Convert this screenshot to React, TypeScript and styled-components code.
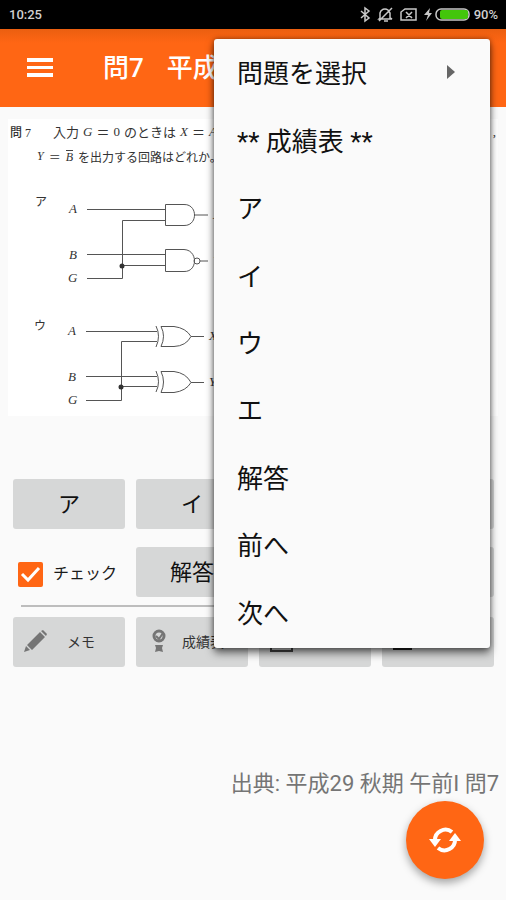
import React from "react";
import styled, { createGlobalStyle } from "styled-components";

const sans = `Roboto, "Noto Sans CJK JP", sans-serif`;

const GlobalStyle = createGlobalStyle`
  *, *::before, *::after { box-sizing: border-box; }
  body { margin: 0; background: #fafafa; color: #1b1b1b; font-family: ${sans}; }
  button, input { font-family: inherit; margin: 0; }
`;

const Screen = styled.div`
  position: relative;
  display: flex;
  flex-direction: column;
  min-height: 100vh;
  overflow: hidden;
`;

const StatusBar = styled.header`
  display: flex;
  align-items: center;
  justify-content: space-between;
  height: 29px;
  padding: 0 8px 0 9px;
  background: #000;
  color: #d0d0d0;
  font-size: 13px;
  font-weight: 500;
`;

const StatusIcons = styled.div`
  display: flex;
  align-items: center;
  gap: 3px;
`;

const Toolbar = styled.div`
  display: flex;
  align-items: center;
  height: 78px;
  padding: 0 26px;
  gap: 49px;
  background: linear-gradient(#ea5f10, #ff6614 14px);
  color: #fff;
`;

const IconButton = styled.button`
  display: flex;
  padding: 0;
  border: 0;
  background: none;
  color: inherit;
`;

const Title = styled.h1`
  display: flex;
  flex: 1;
  gap: 23px;
  margin: 0;
  overflow: hidden;
  white-space: nowrap;
  font-size: 26px;
  font-weight: 500;
  line-height: 40px;
`;

const Figure = styled.section`
  margin: 12px 8px 0;
  padding: 0 0 3px 2px;
  background: #fff;
  color: #333;
`;

const Statement = styled.p<{ $indent?: boolean }>`
  display: flex;
  align-items: center;
  gap: ${(p) => (p.$indent ? 5 : 4)}px;
  height: 25px;
  margin: 0;
  padding: 0 2px 0 ${(p) => (p.$indent ? 27 : 0)}px;
  white-space: nowrap;
  overflow: hidden;
  font-family: "Liberation Serif", "Noto Sans CJK JP", serif;
  font-size: ${(p) => (p.$indent ? 12 : 13)}px;
`;

const QuestionNo = styled.strong`
  width: 39px;
  font-size: 12px;
  font-weight: 500;
`;

const LineEnd = styled.span`
  margin-left: auto;
`;

const Overline = styled.i`
  line-height: 12px;
  border-top: 1px solid #444;
`;

const Circuits = styled.svg`
  display: block;
  width: 100%;
  height: 244px;
  font-family: "Liberation Serif", "Noto Sans CJK JP", serif;
`;

const Answers = styled.div`
  display: grid;
  grid-template-columns: repeat(4, 1fr);
  gap: 18px 11px;
  margin: 63px 12px 0 13px;
`;

const Tools = styled(Answers)`
  margin-top: 10px;
`;

const GreyButton = styled.button`
  height: 50px;
  padding: 0 0 4px;
  border: 0;
  border-radius: 3px;
  background: #d6d7d7;
  color: #111;
  font-size: 22px;
  font-weight: 400;
`;

const ToolButton = styled(GreyButton)`
  display: flex;
  align-items: center;
  padding: 0 0 2px 10px;
  font-size: 14px;
  color: #333;
  white-space: nowrap;
  overflow: hidden;
`;

const ToolLabel = styled.span<{ $start?: boolean }>`
  flex: 1;
  padding-left: ${(p) => (p.$start ? 10 : 0)}px;
  padding-right: ${(p) => (p.$start ? 0 : 12)}px;
  text-align: ${(p) => (p.$start ? "left" : "center")};
`;

const CheckLabel = styled.label`
  display: flex;
  align-items: center;
  gap: 10px;
  padding: 4px 0 0 5px;
  font-size: 16px;
  line-height: 20px;
  white-space: nowrap;
`;

const CheckBox = styled.input`
  appearance: none;
  width: 25px;
  height: 25px;
  border-radius: 2px;
  background: #ff6614
    url("data:image/svg+xml,%3Csvg xmlns='http://www.w3.org/2000/svg' viewBox='0 0 25 25'%3E%3Cpath d='M4 12l6 6L21 6' fill='none' stroke='white' stroke-width='3'/%3E%3C/svg%3E");
`;

const Divider = styled.hr`
  width: calc(100% - 42px);
  height: 2px;
  margin: 8px 21px 0;
  border: 0;
  background: #bdbdbd;
`;

const Source = styled.p`
  margin: 100px 7px 0 0;
  color: #757575;
  text-align: right;
  font-size: 22px;
  line-height: 34px;
  white-space: nowrap;
`;

const Fab = styled.button`
  display: flex;
  align-items: center;
  justify-content: center;
  align-self: flex-end;
  width: 78px;
  height: 78px;
  margin: 0 22px 21px 0;
  padding: 0;
  border: 0;
  border-radius: 50%;
  background: #ff6614;
  color: #fff;
  box-shadow: 0 4px 8px rgba(0, 0, 0, 0.35);
`;

const Menu = styled.div`
  position: absolute;
  top: 39px;
  right: 16px;
  display: grid;
  grid-auto-rows: 1fr;
  width: 276px;
  height: 609px;
  padding-bottom: 2px;
  border-radius: 3px;
  background: #fafafa;
  box-shadow: 0 5px 8px rgba(0, 0, 0, 0.55), 0 0 5px rgba(0, 0, 0, 0.4);
`;

const MenuItem = styled.button`
  display: flex;
  align-items: center;
  justify-content: space-between;
  padding: 0 35px 2px 23px;
  border: 0;
  background: none;
  color: #111;
  font-size: 26px;
  text-align: left;
  white-space: nowrap;
`;

function StatusGlyphs() {
  return (
    <StatusIcons>
      <svg width="111" height="18" viewBox="360 6 111 18" fill="none" stroke="#c8c8c8" strokeWidth="1.5" aria-hidden="true">
        <path d="M361 11l8 7-4 3V8l4 3-8 7" />
        <path d="M380 18v-5a5 5 0 0 1 8-3l2 3v5l2 1h-13zM384 21h4M379 21L392 8" />
        <path d="M405 9h11v11h-15v-8zM406 12l6 6M412 12l-6 6" />
        <path d="M430 8l-6 7h4l-2 6 6-8h-3z" fill="#c8c8c8" stroke="none" />
        <rect x="436" y="9" width="33" height="11" rx="5" />
        <rect x="440" y="10" width="28" height="9" rx="2" fill="#43c60b" stroke="none" />
      </svg>
      <span>90%</span>
    </StatusIcons>
  );
}

function CircuitDrawing() {
  return (
    <Circuits viewBox="10 170 488 244" preserveAspectRatio="xMinYMin meet" role="img" aria-label="論理回路" fill="none" stroke="#555" strokeWidth="1">
      <path d="M87 210.500H165M87 255.500H165M87 279.500H122.500V221.500H165M122.500 266.500H165M194 216H208M200 262H208" />
      <path d="M165.500 205.500H184C198 205 198 227 184 226.500H165.500zM165.500 250.500H184C198 251 198 273 184 272.500H165.500z" />
      <circle cx="197" cy="262" r="3" />
      <path d="M86 332.500H157M86 377.500H157M86 401.500H121.500V342.500H157M121.500 387.500H157M191 337.500H204M191 383.500H204" />
      <path d="M161 327.500H174Q186 329 191 337.500Q186 347 174 347.500H161Q166 337 161 327.500zM156 327Q161 337 156 348" />
      <path d="M161 372.500H174Q186 374 191 383.500Q186 392 174 393.500H161Q166 383 161 372.500zM156 372Q161 383 156 393" />
      <g fill="#333" stroke="none">
        <circle cx="122" cy="267" r="2.5" />
        <circle cx="121" cy="388" r="2.5" />
        <g fontSize="12"><text x="35" y="207">ア</text><text x="34" y="331">ウ</text></g>
        <g fontSize="13" fontStyle="italic">
          <text x="69" y="214">A</text><text x="69" y="260">B</text><text x="68" y="283">G</text>
          <text x="68" y="336">A</text><text x="68" y="382">B</text><text x="68" y="405">G</text>
          <text x="213" y="220">X</text><text x="213" y="266">Y</text>
          <text x="209" y="341">X</text><text x="209" y="387">Y</text>
        </g>
      </g>
    </Circuits>
  );
}

const menuItems = ["問題を選択", "** 成績表 **", "ア", "イ", "ウ", "エ", "解答", "前へ", "次へ"];

export default function App() {
  return (
    <Screen>
      <GlobalStyle />
      <StatusBar>
        <span>10:25</span>
        <StatusGlyphs />
      </StatusBar>
      <Toolbar>
        <IconButton aria-label="メニュー">
          <svg width="28" height="20" viewBox="0 0 28 20" fill="currentColor"><path d="M1 0h26v4H1zM1 8h26v3H1zM1 15h26v4H1z" /></svg>
        </IconButton>
        <Title><span>問7</span><span>平成29</span></Title>
      </Toolbar>
      <Figure>
        <Statement>
          <QuestionNo>問 7</QuestionNo>
          <span>入力</span><i>G</i><span>＝</span><span>0</span><span>のときは</span><i>X</i><span>＝</span><i>A</i>
          <LineEnd>,</LineEnd>
        </Statement>
        <Statement $indent>
          <i>Y</i><span>＝</span><Overline>B</Overline><span>を出力する回路はどれか。</span>
        </Statement>
        <CircuitDrawing />
      </Figure>
      <Answers>
        <GreyButton>ア</GreyButton>
        <GreyButton>イ</GreyButton>
        <GreyButton>ウ</GreyButton>
        <GreyButton>エ</GreyButton>
        <CheckLabel><CheckBox type="checkbox" defaultChecked />チェック</CheckLabel>
        <GreyButton>解答</GreyButton>
        <GreyButton>前へ</GreyButton>
        <GreyButton>次へ</GreyButton>
      </Answers>
      <Divider />
      <Tools>
        <ToolButton>
          <svg width="26" height="26" viewBox="0 0 26 26" fill="#757575"><path d="M1 24l2-6 4 4zM4 17L17 4l5 5L9 22zM18 3l2-1 4 4-1 2z" /></svg>
          <ToolLabel>メモ</ToolLabel>
        </ToolButton>
        <ToolButton>
          <svg width="26" height="26" viewBox="0 0 26 26" fill="none" stroke="#757575"><circle cx="13" cy="8" r="5" strokeWidth="3" /><path d="M10 8l3 3 4-6" strokeWidth="2" /><path d="M9 17h8l-1 3 1 4-4-1-4 1 1-4z" fill="#757575" stroke="none" /></svg>
          <ToolLabel $start>成績表</ToolLabel>
        </ToolButton>
        <ToolButton aria-label="表示">
          <svg width="26" height="26" viewBox="0 0 26 26" fill="none" stroke="#444" strokeWidth="2"><rect x="2" y="2" width="21" height="21" /></svg>
        </ToolButton>
        <ToolButton aria-label="一覧">
          <svg width="26" height="26" viewBox="0 0 26 26" fill="#222"><rect x="1" y="3" width="19" height="19" /></svg>
        </ToolButton>
      </Tools>
      <Source>出典: 平成29 秋期 午前I 問7</Source>
      <Fab aria-label="更新">
        <svg width="34" height="28" viewBox="0 0 34 28" fill="none" stroke="currentColor" strokeWidth="4">
          <path d="M7 15A10.500 10.500 0 0 1 24 6M27 13A10.500 10.500 0 0 1 10 22" />
          <path d="M1 13h12l-6 8zM21 15h12l-6-8z" fill="currentColor" stroke="none" />
        </svg>
      </Fab>
      <Menu>
        {menuItems.map((label, i) => (
          <MenuItem key={label}>
            {label}
            {i === 0 && <svg width="8" height="14" viewBox="0 0 8 14" fill="#666"><path d="M0 0l8 7-8 7z" /></svg>}
          </MenuItem>
        ))}
      </Menu>
    </Screen>
  );
}
